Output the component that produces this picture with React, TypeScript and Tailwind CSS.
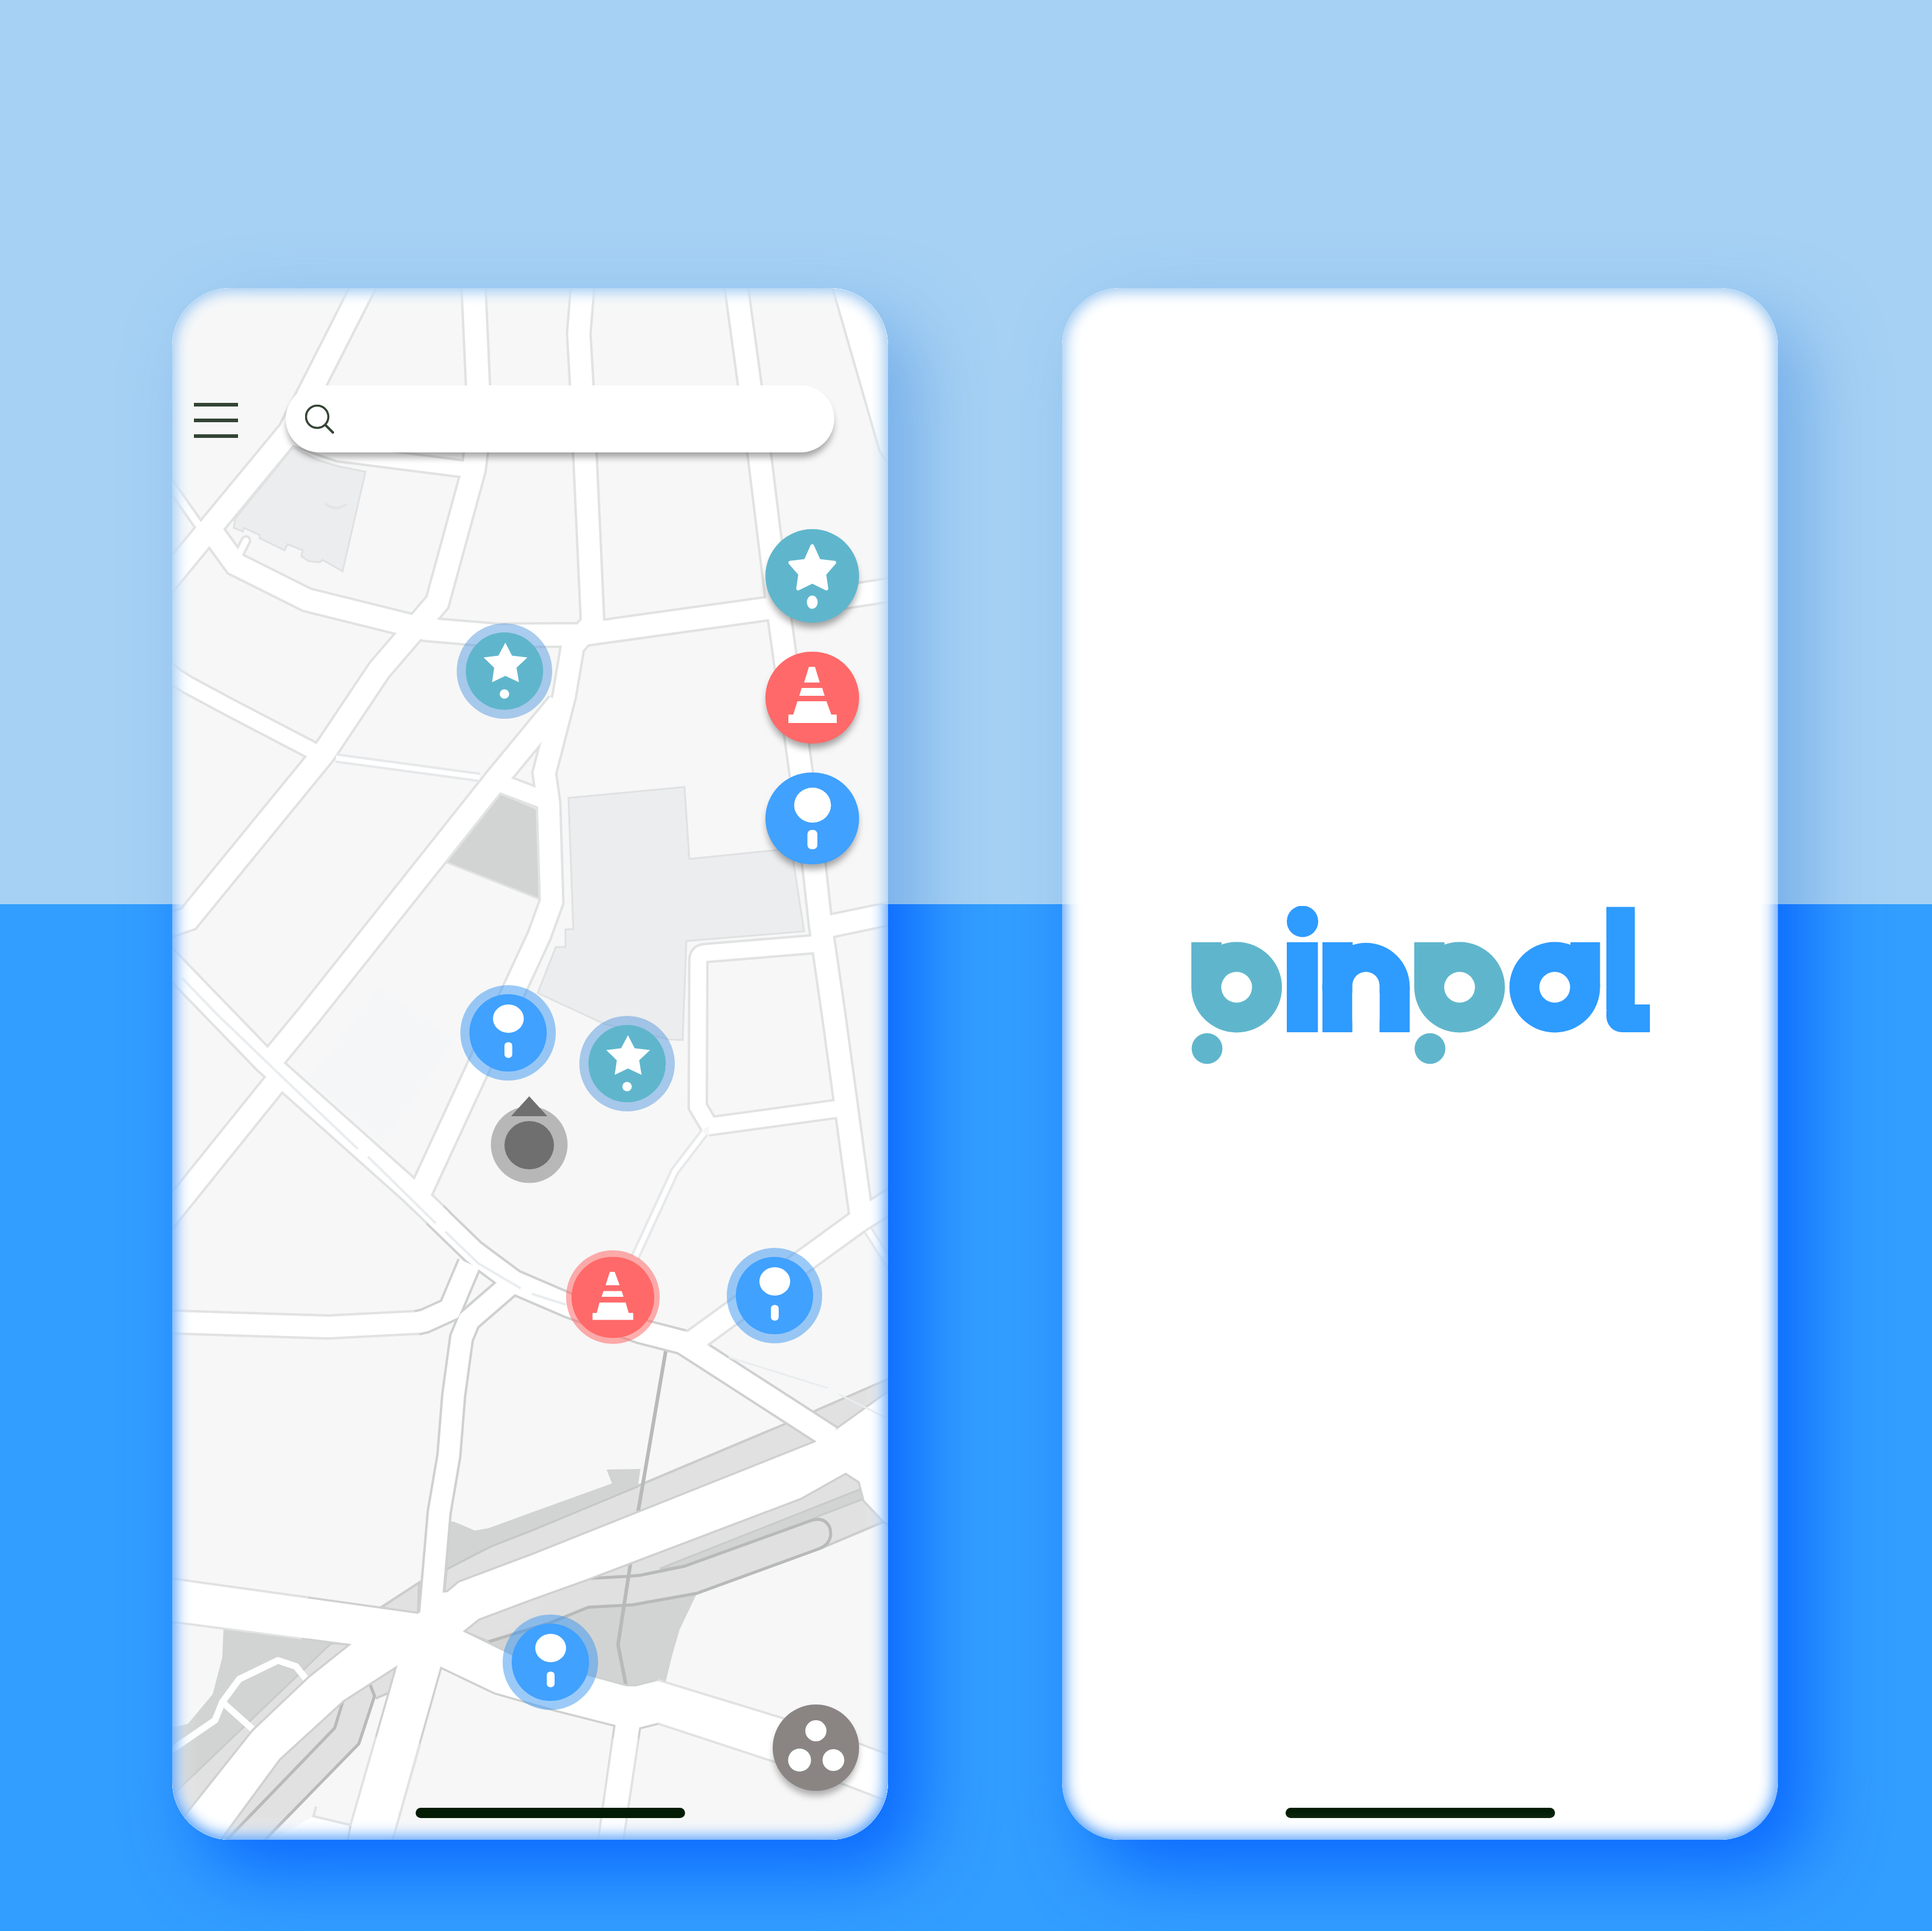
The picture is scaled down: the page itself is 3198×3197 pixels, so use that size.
import React from 'react';

type Road = { d: string; w: number; tone?: 'light' | 'mid' | 'dark' };

const casingColor = { light: '#e6e8ea', mid: '#e1e2e2', dark: '#cfd1d0' };

const roads: Road[] = [
  { d: 'M620 438L480 714L347 875L262 978', w: 36 },
  { d: 'M262 774L340 885', w: 11 },
  { d: 'M347 875L390 934L508 993L705 1042L823 1052L960 1051L1268 1008L1490 974', w: 35 },
  { d: 'M782 440L784 478L794 700L784 778L724 997L690 1037L628 1109L535 1248L312 1521L262 1538', w: 36 },
  { d: 'M480 722L560 750L780 778', w: 24 },
  { d: 'M966 440L964 478L958 553L963 638L981 1032L948 1069L934 1152L901 1280L908 1330L913 1493L893 1548L695 1976', w: 35 },
  { d: 'M925 1165L825 1286L512 1680L446 1760', w: 36 },
  { d: 'M464 1782L262 2033', w: 35 },
  { d: 'M262 1574L440 1758L680 1972L730 2020', w: 36 },
  { d: 'M720 2011L784 2073L850 2122L943 2162L1060 2204L1130 2222L1251 2300L1375 2380', w: 36, tone: 'dark' },
  { d: 'M262 2189L294 2189L543 2197L699 2189', w: 34 },
  { d: 'M690 2190L703 2187L745 2168L777 2092', w: 35, tone: 'dark' },
  { d: 'M850 2122L776 2186L764 2215L751 2310L743 2410L727 2504L711 2690', w: 34, tone: 'dark' },
  { d: 'M810 1290L905 1326', w: 28 },
  { d: 'M556 1255L794 1287', w: 8, tone: 'light' },
  { d: 'M270 1105L290 1121L311 1134L380 1171L520 1244', w: 25 },
  { d: 'M1214 440L1257 753L1289 1014L1347 1429L1358 1529L1380 1680L1425 2010', w: 35 },
  { d: 'M1370 1534L1490 1509', w: 34 },
  { d: 'M1350 1563L1166 1578Q1156 1579 1156 1590L1155 1832L1174 1864', w: 26 },
  { d: 'M1172 1865L1384 1836', w: 26 },
  { d: 'M1166 1875L1117 1939L1051 2082', w: 8, tone: 'light' },
  { d: 'M1490 1978L1418 2024L1140 2226', w: 35 },
  { d: 'M1437 2037L1480 2104', w: 9, tone: 'light' },
];

const avenues = [
  '250,2612 290,2616 692,2672 735,2636 766,2701 729,2759 658,2757 582,2722 290,2684 250,2681',
  '700,2690 582,2722 513,2777 419,2866 311,3002 260,3060 350,3060 370,3037 462,2912 568,2815 658,2757 729,2759',
  '692,2672 733,2637 741,2636 760,2620 880,2575 1349,2388 1386,2366 1464,2310 1500,2290 1500,2540 1464,2519 1431,2484 1423,2453 1400,2438 1325,2480 972,2614 880,2647 792,2680 766,2701 729,2759',
  '700,2690 766,2701 848,2741 982,2777 1037,2792 1053,2792 1088,2783 1294,2846 1423,2889 1500,2918 1500,2992 1396,2952 1282,2915 1090,2852 1058,2860 1028,3060 990,3060 1019,2856 921,2831 819,2802 729,2759',
  '658,2757 645,2803 582,3022 575,3060 644,3060 729,2759 700,2690',
];

function CityMap() {
  return (
    <svg
      viewBox="285 477 1185 2569"
      preserveAspectRatio="xMidYMid slice"
      className="absolute inset-0 h-full w-full"
      aria-hidden="true"
    >
      <rect x="285" y="477" width="1185" height="2569" fill="#f7f7f7" />
      <polygon points="1372,455 1380,484 1456,747 1475,775 1500,775 1500,455" fill="#fff" stroke="#e1e2e2" strokeWidth="4" />

      {/* buildings and parks */}
      <polygon points="627,1636 752,1721 633,1892 512,1787" fill="#f5f6f8" />
      <g fill="#ecedef" stroke="#e0e1e2" strokeWidth="3">
        <polygon points="485,741 389,859 387,874 402,880 404,874 430,886 430,891 471,911 476,901 501,911 499,921 511,929 529,931 534,927 567,946 605,781 560,772 527,762" />
        <polygon points="941,1321 1133,1303 1141,1422 1310,1405 1331,1542 1136,1558 1130,1722 1108,1721 1000,1695 890,1644 920,1568 936,1568 936,1539 949,1538" />
      </g>
      <path d="M539 834Q556 848 574 834" fill="none" stroke="#e2e4e6" strokeWidth="4" />
      <polygon points="823,1311 890,1340 894,1489 737,1427" fill="#d2d4d3" stroke="#e1e2e2" strokeWidth="3" />

      {/* railway corridor, north-east */}
      <polygon points="739,2598 813,2560 880,2534 1303,2356 1500,2270 1500,2320 1386,2370 1349,2395 880,2580 735,2640" fill="#e1e1e1" stroke="#cbcdcc" strokeWidth="4" />
      <polygon points="742,2519 750,2519 770,2527 786,2534 809,2530 880,2504 1013,2456 1004,2433 1060,2432 1056,2461 880,2534 813,2560 739,2598" fill="#d2d4d3" />
      <path d="M739 2598L813 2560L880 2534L1056 2461" fill="none" stroke="#c6c8c7" strokeWidth="3" />
      <polygon points="1200,2454 1304,2406 1349,2384 1349,2392 1231,2444" fill="#d2d4d3" />

      {/* railway corridor, south-east */}
      <polygon points="1153,2639 1125,2698 1113,2739 1102,2784 1053,2796 982,2780 848,2745 809,2718 910,2687 974,2661 1047,2657" fill="#d2d4d3" />
      <polygon points="766,2700 792,2680 972,2614 1325,2480 1400,2438 1423,2453 1431,2484 1464,2519 1360,2563 1153,2638 1047,2657 974,2661 809,2718" fill="#e1e1e1" stroke="#cbcdcc" strokeWidth="4" />
      <polygon points="1092,2597 1423,2466 1431,2481 1358,2509 1341,2517 1133,2593" fill="#d2d4d3" stroke="#c9cbca" strokeWidth="3" />
      <path
        d="M960 2614L1037 2610L1060 2608L1133 2593L1341 2518C1362 2510 1375 2522 1375 2539C1375 2552 1366 2560 1356 2564L1153 2638L1047 2657L974 2661L910 2687L809 2718"
        fill="#e0e0e0"
        stroke="#b8b9b9"
        strokeWidth="5"
      />
      <path d="M1104 2225L1055 2510L1044 2586L1023 2723L1037 2794" fill="none" stroke="#b8b9b9" strokeWidth="6" />

      {/* south-west */}
      <polygon points="631,2661 694,2620 692,2674" fill="#e1e1e1" stroke="#cbcdcc" strokeWidth="4" />
      <polygon points="370,2693 368,2744 352,2805 311,2854 270,2864 270,2990 297,2961 548,2721 582,2722 582,2714" fill="#d2d4d3" />
      <polygon points="260,2996 297,2961 548,2721 582,2722 513,2777 419,2866 311,3002 260,3060" fill="#e1e1e1" stroke="#c9cbca" strokeWidth="3" />
      <g fill="none" stroke="#fff" strokeWidth="11" strokeLinejoin="round">
        <path d="M510 2784L490 2759L460 2749L396 2780L368 2818L356 2848L280 2900" />
        <path d="M368 2818L424 2868" />
      </g>
      <polygon points="568,2815 611,2785 660,2757 645,2803 620,2812 594,2887 447,3037 420,3064 350,3060 370,3037 462,2912" fill="#e1e1e1" />
      <polygon points="519,3007 582,3022 582,3060 425,3060" fill="#fff" />
      <g fill="none" stroke="#b8b9b9" strokeWidth="5">
        <path d="M611 2785L620 2808L594 2887L425 3060" />
        <path d="M568 2815L554 2861L360 3062" />
      </g>
      <path d="M622 2812L645 2802" stroke="#cbcdcc" strokeWidth="4" />

      {/* streets: every casing first, then every surface, so crossings stay open */}
      <g fill="none" strokeLinejoin="miter">
        {roads.map((r) => (
          <path key={r.d} d={r.d} stroke={casingColor[r.tone ?? 'mid']} strokeWidth={r.w + 8} />
        ))}
      </g>
      <path d="M407 895L396 917" stroke="#e1e2e2" strokeWidth="18" strokeLinecap="round" />
      <g fill="none" stroke="#cfd1d0" strokeWidth="7">
        {avenues.map((p) => (
          <polygon key={p} points={p} />
        ))}
      </g>
      <g fill="none" stroke="#e1e2e2" strokeWidth="7">
        <path d="M262 2614L290 2616L510 2647M262 2682L290 2684L500 2711" />
        <path d="M582 3022L624 2876M650 3040L694 2886M1088 2783L1294 2846L1423 2889L1480 2910M1090 2852L1282 2915L1396 2952L1480 2984" />
        <path d="M1055 2878L1028 3060M1017 2878L990 3060" />
      </g>
      <path d="M523 2991L519 3007L582 3022" fill="none" stroke="#e1e2e2" strokeWidth="4" />
      <g fill="none" stroke="#fff" strokeLinejoin="miter">
        {roads.map((r) => (
          <path key={r.d} d={r.d} strokeWidth={r.w} />
        ))}
      </g>
      <path d="M407 895L392 925" stroke="#fff" strokeWidth="10" strokeLinecap="round" />
      <g fill="#fff">
        {avenues.map((p) => (
          <polygon key={p} points={p} />
        ))}
      </g>
      <g fill="none" stroke="#e9edf0" strokeWidth="4">
        <path d="M301 1619L360 1680L466 1782L592 1902M609 1915L721 2025M737 2039L792 2092L862 2133M880 2142L937 2160" />
        <path d="M1206 2247L1370 2298M1388 2308L1464 2346" strokeWidth="3" />
      </g>
    </svg>
  );
}

function StarLarge() {
  return (
    <svg viewBox="0 0 155 155" className="h-full w-full" aria-hidden="true">
      <path
        d="M77.5 28L88.5 52.5L114 55.5L97.5 74.5L101 98.5L77.5 87L54 98.5L57.5 74.5L41 55.5L66.5 52.5Z"
        fill="#fff"
        stroke="#fff"
        strokeWidth="6"
        strokeLinejoin="round"
      />
      <ellipse cx="77.5" cy="121" rx="9" ry="11" fill="#fff" />
    </svg>
  );
}

function ConeLarge() {
  return (
    <svg viewBox="0 0 155 152" className="h-full w-full" aria-hidden="true" fill="#fff">
      <path d="M72 25H82L90 51H64ZM60 60H94L98 73H56ZM53 82H101L109 104H118V118H38V104H46Z" />
    </svg>
  );
}

function PinLarge() {
  return (
    <svg viewBox="0 0 155 152" className="h-full w-full" aria-hidden="true" fill="#fff">
      <ellipse cx="78" cy="54" rx="30.5" ry="29" />
      <rect x="69.5" y="95" width="16.5" height="32" rx="7" />
    </svg>
  );
}

function StarSmall() {
  return (
    <svg viewBox="0 0 158 158" className="absolute inset-0 h-full w-full" aria-hidden="true" fill="#fff">
      <path d="M80.5 32L91.5 53.5L117 56.5L99 73.5L103 97.5L80.5 87L58.5 97.5L62 73.5L44.5 56.5L69 53.5Z" />
      <circle cx="79" cy="117" r="7.8" />
    </svg>
  );
}

function ConeSmall() {
  return (
    <svg viewBox="0 0 154 154" className="absolute inset-0 h-full w-full" aria-hidden="true" fill="#fff">
      <path d="M72 35.5H80L88 57.5H65ZM61.5 67H91.5L94.5 76.5H58.5ZM55 86H98L103 103H110.5V114.5H43.5V103H50.5Z" />
    </svg>
  );
}

function PinSmall() {
  return (
    <svg viewBox="0 0 158 158" className="absolute inset-0 h-full w-full" aria-hidden="true" fill="#fff">
      <ellipse cx="79.5" cy="55.5" rx="25.5" ry="23.5" />
      <rect x="73" y="94.5" width="13" height="26" rx="6" />
    </svg>
  );
}

type MarkerKind = 'star' | 'pin' | 'cone';

const markerStyle: Record<MarkerKind, { ring: string; core: string; glyph: React.ReactNode; label: string }> = {
  star: {
    ring: 'h-[158px] w-[158px] bg-[#5599dd]/50',
    core: 'h-32 w-32 bg-[#5fb6cc]',
    glyph: <StarSmall />,
    label: 'Favourite place',
  },
  pin: {
    ring: 'h-[158px] w-[158px] bg-[#3795f1]/50',
    core: 'h-32 w-32 bg-[#40a1ff]',
    glyph: <PinSmall />,
    label: 'Pin',
  },
  cone: {
    ring: 'h-[155px] w-[155px] bg-[#ff6969]/55',
    core: 'h-[134px] w-[137px] bg-[#ff6969]',
    glyph: <ConeSmall />,
    label: 'Road works',
  },
};

function Marker({ kind, at }: { kind: MarkerKind; at: string }) {
  const s = markerStyle[kind];
  return (
    <button
      type="button"
      aria-label={s.label}
      className={`absolute flex items-center justify-center rounded-full ${s.ring} ${at}`}
    >
      <span className={`rounded-full ${s.core}`} />
      {s.glyph}
    </button>
  );
}

function CurrentPosition() {
  return (
    <svg
      viewBox="0 0 128 144"
      className="absolute top-[1338px] left-[527px] h-36 w-32"
      role="img"
      aria-label="Current position"
    >
      <circle cx="64" cy="80" r="63.5" fill="#b7b7b7" />
      <path d="M64 0L94 33H34Z" fill="#6f6f6f" />
      <ellipse cx="64" cy="81" rx="41" ry="40" fill="#6f6f6f" />
    </svg>
  );
}

function HomeBar({ place }: { place: string }) {
  return <div className={`mb-9 h-[17px] w-[446px] rounded-full bg-[#021d04] ${place}`} />;
}

function Phone({ label, children }: { label: string; children: React.ReactNode }) {
  return (
    <section aria-label={label} className="relative aspect-[1185/2569] flex-1">
      <div className="absolute inset-0 rounded-[96px] shadow-[50px_50px_120px_rgba(70,141,223,0.5)] [clip-path:inset(-300px_-300px_calc(100%-1020px)_-300px)]" />
      <div className="absolute inset-0 rounded-[96px] shadow-[50px_50px_120px_rgba(0,90,255,0.8)] [clip-path:inset(1020px_-300px_-300px_-300px)]" />
      <div className="relative flex h-full flex-col overflow-hidden rounded-[96px] bg-white">{children}</div>
    </section>
  );
}

function SoftRim() {
  return (
    <>
      <div className="pointer-events-none absolute inset-0 rounded-[96px] shadow-[inset_0_0_24px_5px_#94c3f0,inset_0_0_36px_8px_#fff] [clip-path:inset(0_0_calc(100%-1020px)_0)]" />
      <div className="pointer-events-none absolute inset-0 rounded-[96px] shadow-[inset_0_0_24px_5px_#4497fb,inset_0_0_36px_8px_#fff] [clip-path:inset(1020px_0_0_0)]" />
    </>
  );
}

function Logo() {
  return (
    <svg viewBox="0 0 760 262" className="mt-[1023px] w-[760px] self-center" role="img" aria-label="pinpal">
      <g fill="#5fb6cc">
        <rect x="1" y="60" width="50" height="75" />
        <circle cx="76" cy="134.5" r="75" />
        <circle cx="27" cy="236" r="25.5" />
        <rect x="370" y="60" width="50" height="75" />
        <circle cx="445" cy="134.5" r="75" />
        <circle cx="396" cy="236" r="25.5" />
      </g>
      <g fill="#2e9bff">
        <circle cx="185" cy="25.5" r="26" />
        <rect x="159" y="60" width="51.5" height="149" />
        <rect x="218" y="60" width="50" height="149" />
        <circle cx="290" cy="133.5" r="72.5" />
        <rect x="312" y="134" width="50.5" height="75" />
        <circle cx="602.5" cy="134.5" r="75" />
        <rect x="628.5" y="60" width="49" height="75" />
        <rect x="688" y="1.5" width="47" height="170" />
        <rect x="688" y="150" width="60" height="59" rx="26" />
        <rect x="712" y="163" width="48" height="46" />
      </g>
      <g fill="#fff">
        <circle cx="76" cy="134.5" r="25.5" />
        <circle cx="445" cy="134.5" r="25.5" />
        <circle cx="602.5" cy="134.5" r="25.5" />
        <rect x="267.5" y="109" width="45" height="101" rx="22.5" />
        <rect x="267.5" y="144" width="45" height="66" />
        <rect x="735" y="140" width="25" height="23" />
      </g>
    </svg>
  );
}

export default function App() {
  return (
    <main className="flex min-h-screen items-start gap-[288px] bg-[linear-gradient(#a6d1f4_1497px,#329eff_1497px)] pt-[477px] pr-[255px] pb-[150px] pl-[285px]">
      <Phone label="Map">
        <CityMap />
        <SoftRim />

        <Marker kind="star" at="top-[555px] left-[471px]" />
        <Marker kind="pin" at="top-[1154px] left-[477px]" />
        <Marker kind="star" at="top-[1205px] left-[674px]" />
        <CurrentPosition />
        <Marker kind="cone" at="top-[1593px] left-[652px]" />
        <Marker kind="pin" at="top-[1589px] left-[918px]" />
        <Marker kind="pin" at="top-[2196px] left-[547px]" />

        <header className="relative mt-[161px] mr-[89px] ml-9 flex items-center gap-[79px]">
          <button type="button" aria-label="Menu" className="flex w-[73px] flex-col gap-5 pt-1">
            <span className="h-[6px] w-full bg-[#334434]" />
            <span className="h-[6px] w-full bg-[#334434]" />
            <span className="h-[6px] w-full bg-[#334434]" />
          </button>
          <label className="flex h-[111px] flex-1 items-center gap-6 rounded-full bg-white px-8 shadow-[0_10px_12px_-2px_rgba(0,0,0,0.35)]">
            <svg viewBox="0 0 48 48" className="h-12 w-12 shrink-0" fill="none" stroke="#334434" strokeWidth="4" strokeLinecap="round" aria-hidden="true">
              <circle cx="20" cy="20" r="18.5" strokeWidth="3.5" />
              <path d="M34 34L46 46" />
            </svg>
            <input
              type="search"
              aria-label="Search"
              className="h-full min-w-0 flex-1 bg-transparent font-[Roboto,sans-serif] text-4xl text-[#334434] outline-none"
            />
          </label>
        </header>

        <nav aria-label="Add to map" className="relative mt-[127px] mr-12 flex flex-col items-end gap-12">
          <button type="button" aria-label="Favourites" className="h-[155px] w-[155px] rounded-full bg-[#5fb6cc] shadow-[0_10px_12px_-2px_rgba(0,0,0,0.35)]">
            <StarLarge />
          </button>
          <button type="button" aria-label="Report road works" className="h-[152px] w-[155px] rounded-full bg-[#ff6969] shadow-[0_10px_12px_-2px_rgba(0,0,0,0.35)]">
            <ConeLarge />
          </button>
          <button type="button" aria-label="Drop a pin" className="h-[152px] w-[155px] rounded-full bg-[#40a1ff] shadow-[0_10px_12px_-2px_rgba(0,0,0,0.35)]">
            <PinLarge />
          </button>
        </nav>

        <div className="relative mt-auto flex flex-col">
          <button type="button" aria-label="Groups" className="mr-12 mb-7 h-[143px] w-[143px] self-end rounded-full bg-[#8a8583] shadow-[0_10px_12px_-2px_rgba(0,0,0,0.3)]">
            <svg viewBox="0 0 143 143" className="h-full w-full" fill="#fff" aria-hidden="true">
              <circle cx="71.5" cy="43.5" r="17.5" />
              <circle cx="44.5" cy="92" r="19" />
              <circle cx="100.5" cy="92" r="18" />
            </svg>
          </button>
          <HomeBar place="ml-[403px]" />
        </div>
      </Phone>

      <Phone label="Welcome">
        <SoftRim />
        <Logo />
        <HomeBar place="mt-auto self-center" />
      </Phone>
    </main>
  );
}
